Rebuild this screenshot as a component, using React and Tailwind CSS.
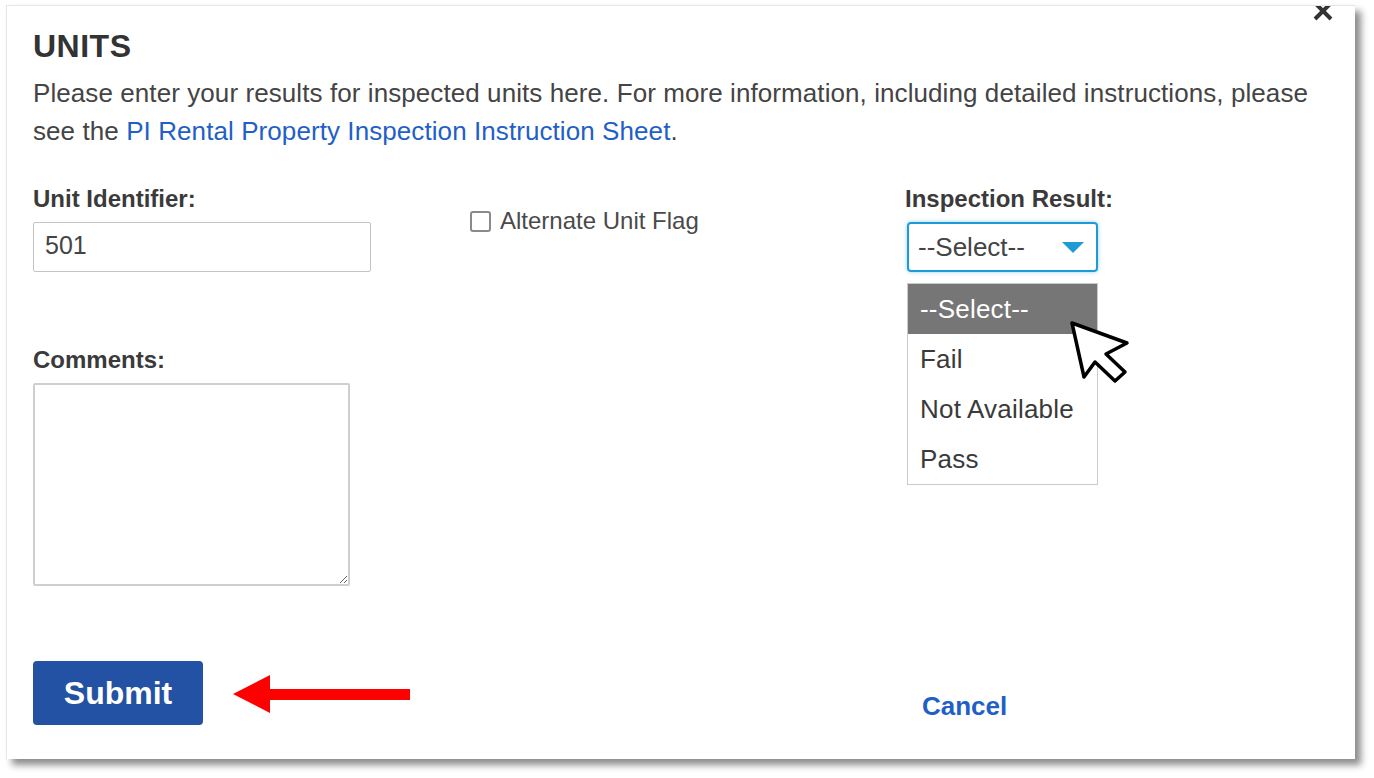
import { useState } from 'react'

const options = ['--Select--', 'Fail', 'Not Available', 'Pass']

export default function App() {
  const [unit, setUnit] = useState('501')
  const [comments, setComments] = useState('')
  const [altFlag, setAltFlag] = useState(false)

  return (
    <div className="min-h-screen bg-white font-['Liberation_Sans',Arial,sans-serif] pt-[5px] pl-[6px]">
      {/* Modal panel */}
      <div className="relative w-[1349px] h-[754px] bg-white border-t border-l border-[#e6e6e6] shadow-[6px_6px_7px_rgba(0,0,0,0.45)] overflow-hidden pt-[24px] pl-[26px] pr-[40px]">
        {/* Close */}
        <button className="absolute top-[-6px] right-[21px] w-[22px] h-[22px] text-[#333]" aria-label="Close">
          <svg viewBox="0 0 22 22" className="w-full h-full" fill="none" stroke="currentColor" strokeWidth="4">
            <path d="M3 3l16 16M19 3L3 19" />
          </svg>
        </button>

        <h2 className="text-[32px] leading-[32px] font-bold text-[#333] tracking-[0.5px]">UNITS</h2>
        <p className="mt-[12px] text-[26px] leading-[38px] tracking-[0.08px] text-[#444]">
          Please enter your results for inspected units here. For more information, including detailed instructions, please see the{' '}
          <a href="#" className="text-[#1f5fc7]">PI Rental Property Inspection Instruction Sheet</a>.
        </p>

        {/* Fields */}
        <div className="mt-[35px] flex">
          <div className="w-[437px]">
            <label className="block text-[24px] leading-[28px] font-bold text-[#3a3a3a]">Unit Identifier:</label>
            <input
              value={unit}
              onChange={(e) => setUnit(e.target.value)}
              className="mt-[9px] w-[338px] h-[50px] border border-[#c4c4c4] rounded-[2px] pl-[11px] pr-[7px] pb-[3px] text-[25px] text-[#444] outline-none"
            />

            <label className="mt-[74px] block text-[24px] leading-[28px] font-bold text-[#3a3a3a]">Comments:</label>
            <textarea
              value={comments}
              onChange={(e) => setComments(e.target.value)}
              className="mt-[9px] block w-[317px] h-[203px] border-2 border-[#cfcfcf] rounded-[2px] outline-none"
            />
          </div>

          <div className="w-[435px]">
            <label className="mt-[22px] flex items-center gap-[9px] text-[24px] leading-[28px] text-[#4a4a4a]">
              <input
                type="checkbox"
                checked={altFlag}
                onChange={(e) => setAltFlag(e.target.checked)}
                className="appearance-none w-[21px] h-[21px] border-2 border-[#8a8a8a] rounded-[3px] bg-white"
              />
              Alternate Unit Flag
            </label>
          </div>

          <div>
            <label className="block text-[24px] leading-[28px] font-bold text-[#3a3a3a]">Inspection Result:</label>
            <div className="relative mt-[9px] ml-[2px]">
              <div className="w-[191px] h-[50px] border-2 border-[#1e9bd7] rounded-[4px] shadow-[0_0_4px_rgba(30,155,215,0.45)] flex items-center justify-between pl-[9px] pr-[12px] text-[26px] text-[#444]">
                <span>--Select--</span>
                <svg width="22" height="11" viewBox="0 0 22 11">
                  <path d="M0 0h22L11 11z" fill="#1e9bd7" />
                </svg>
              </div>

              {/* Open dropdown list */}
              <ul className="absolute left-0 top-[61px] w-[191px] border border-[#cacaca] bg-white text-[26px] tracking-[0.2px] text-[#3a3a3a]">
                {options.map((o, i) => (
                  <li
                    key={o}
                    className={`h-[50px] flex items-center pl-[12px] ${i === 0 ? 'bg-[#767676] text-white' : ''}`}
                  >
                    {o}
                  </li>
                ))}
              </ul>

              {/* Mouse pointer */}
              <svg className="absolute left-[158px] top-[93px]" width="70" height="72" viewBox="0 0 70 72">
                <path
                  d="M7 8 L19 62 L30 47 L50 66 L60 57 L41 39 L62 28 Z"
                  fill="#fff"
                  stroke="#000"
                  strokeWidth="3.5"
                  strokeLinejoin="round"
                />
              </svg>
            </div>
          </div>
        </div>

        {/* Actions */}
        <div className="mt-[75px] flex items-start">
          <div className="w-[872px] flex items-center">
            <button className="w-[170px] h-[64px] rounded-[4px] bg-[#2351a3] text-white text-[32px] font-bold">Submit</button>
            <svg className="ml-[30px] mt-[2px]" width="177" height="38" viewBox="0 0 177 38">
              <path d="M0 19 L37 0 L37 38 Z" fill="#ff0000" />
              <rect x="36" y="14" width="141" height="11" fill="#ff0000" />
            </svg>
          </div>
          <a href="#" className="mt-[30px] ml-[17px] text-[26px] leading-[30px] font-bold text-[#1f5fc7]">Cancel</a>
        </div>
      </div>
    </div>
  )
}
